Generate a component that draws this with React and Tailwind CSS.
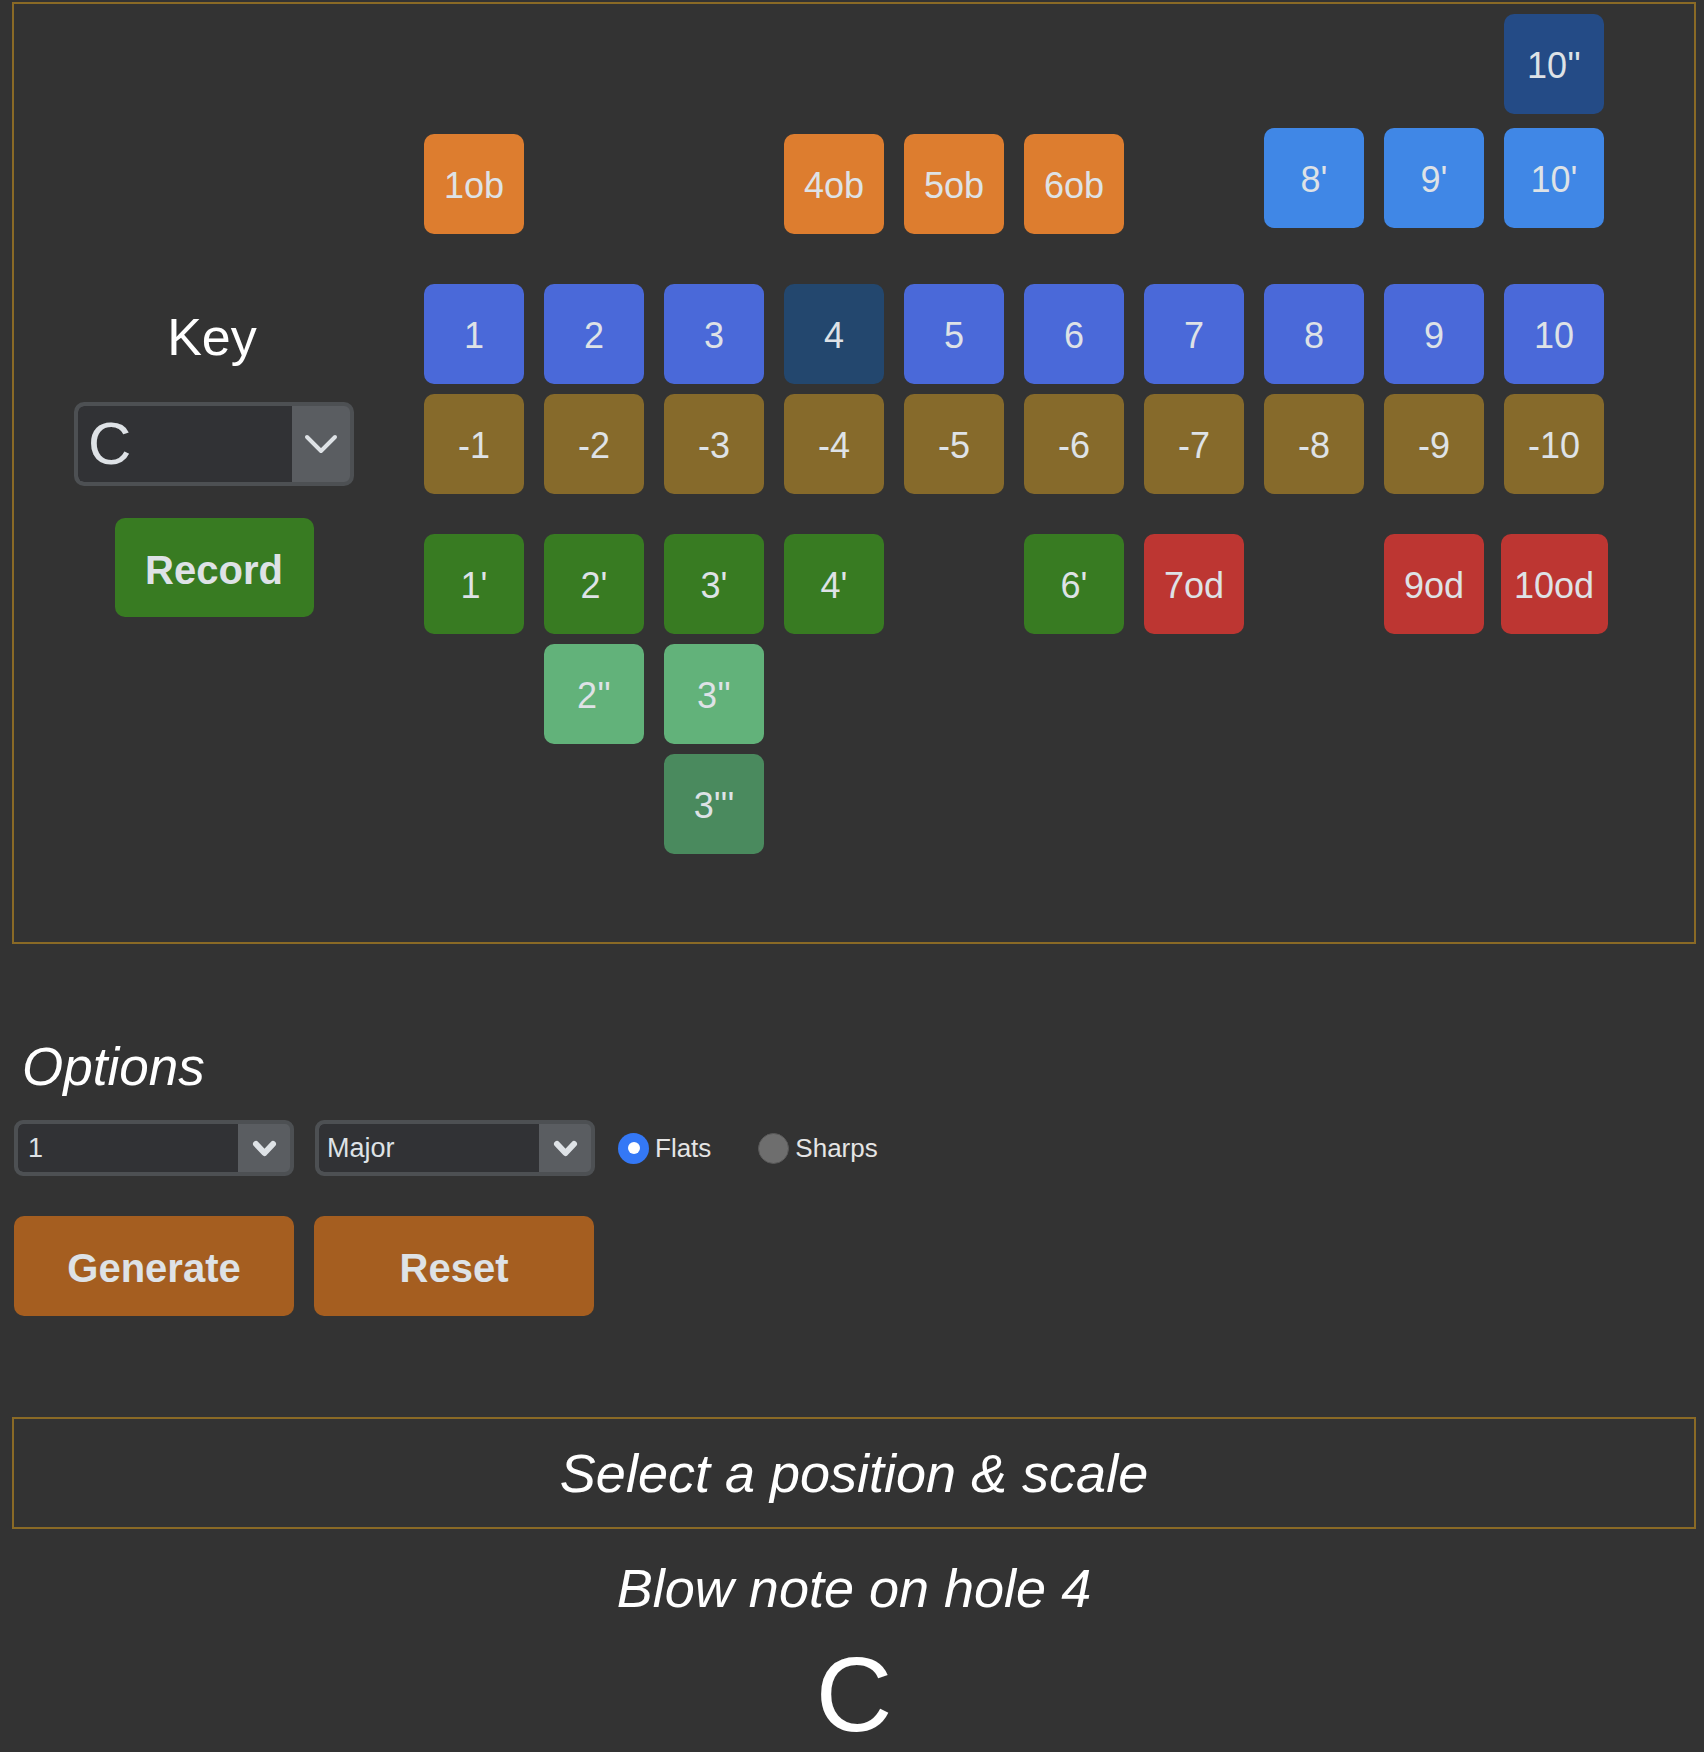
import React from "react";

const BOX =
  "shrink-0 h-[100px] min-w-[100px] px-[13px] pt-[4px] rounded-[10px] flex items-center justify-center text-[36px] text-[#dee2e6]";

const OB = "bg-[#dd7d2f] mt-[6px]";
const BB = "bg-[#4087e6]";
const BB2 = "bg-[#244b86]";
const BLOW = "bg-[#4a69d9]";
const BLOWHI = "bg-[#23476e]";
const DRAW = "bg-[#866a2b]";
const DB = "bg-[#387b22]";
const DB2 = "bg-[#62b27a]";
const DB3 = "bg-[#4a8a5e]";
const OD = "bg-[#bd3632]";
const OD10 = "bg-[#bd3632] w-[107px]";

const n = null;
const rows = [
  { mt: "mt-[0px]", cells: [n, n, n, n, n, n, n, n, n, ["10''", BB2]] },
  {
    mt: "mt-[14px]",
    cells: [
      ["1ob", OB],
      n,
      n,
      ["4ob", OB],
      ["5ob", OB],
      ["6ob", OB],
      n,
      ["8'", BB],
      ["9'", BB],
      ["10'", BB],
    ],
  },
  {
    mt: "mt-[50px]",
    cells: [1, 2, 3, 4, 5, 6, 7, 8, 9, 10].map((i) => [String(i), i === 4 ? BLOWHI : BLOW]),
  },
  {
    mt: "mt-[10px]",
    cells: [1, 2, 3, 4, 5, 6, 7, 8, 9, 10].map((i) => ["-" + i, DRAW]),
  },
  {
    mt: "mt-[40px]",
    cells: [
      ["1'", DB],
      ["2'", DB],
      ["3'", DB],
      ["4'", DB],
      n,
      ["6'", DB],
      ["7od", OD],
      n,
      ["9od", OD],
      ["10od", OD10],
    ],
  },
  { mt: "mt-[10px]", cells: [n, ["2''", DB2], ["3''", DB2], n, n, n, n, n, n, n] },
  { mt: "mt-[10px]", cells: [n, n, ["3'''", DB3], n, n, n, n, n, n, n] },
];

function Chevron({ w, h, sw }) {
  return (
    <svg width={w} height={h} viewBox={`0 0 ${w} ${h}`} fill="none">
      <polyline
        points={`${sw / 2 + 1},${sw / 2 + 1} ${w / 2},${h - sw / 2 - 1} ${w - sw / 2 - 1},${sw / 2 + 1}`}
        stroke="#dee2e6"
        strokeWidth={sw}
        strokeLinecap="round"
        strokeLinejoin="round"
      />
    </svg>
  );
}

export default function App() {
  return (
    <div className="min-h-[1752px] w-[1704px] bg-[#333333] font-['Liberation_Sans',Arial,sans-serif] overflow-hidden">
      {/* Harmonica box */}
      <div className="ml-[12px] mt-[2px] w-[1684px] border-2 border-[#8a6a26] flex">
        <div className="w-[400px] flex flex-col items-center pt-[303px]">
          <div className="text-[52px] leading-[60px] text-white -ml-[4px]">Key</div>
          <div className="mt-[35px] w-[280px] h-[84px] rounded-[10px] border-4 border-[#4d5053] bg-[#5a5d61] flex overflow-hidden">
            <div className="flex-1 bg-[#313235] rounded-[6px] rounded-r-none flex items-center pl-[10px] text-[60px] text-[#dee2e6]">
              C
            </div>
            <div className="w-[58px] flex items-center justify-center">
              <Chevron w={34} h={20} sw={4} />
            </div>
          </div>
          <div className="mt-[32px] w-[199px] h-[99px] pt-[4px] rounded-[10px] bg-[#387b22] flex items-center justify-center text-[40px] font-bold text-[#dee2e6]">
            Record
          </div>
        </div>
        <div className="ml-[10px] flex flex-col pt-[10px] pb-[88px]">
          {rows.map((r, ri) => (
            <div key={ri} className={`flex items-start gap-[20px] ${r.mt}`}>
              {r.cells.map((c, ci) => (
                <div key={ci} className="w-[100px] flex justify-center">
                  {c ? <div className={`${BOX} ${c[1]}`}>{c[0]}</div> : null}
                </div>
              ))}
            </div>
          ))}
        </div>
      </div>

      {/* Options */}
      <div className="px-[14px]">
        <div className="mt-[93px] ml-[8px] text-[53px] leading-[60px] italic text-white">Options</div>
        <div className="mt-[23px] flex items-center">
          <div className="w-[280px] h-[56px] rounded-[9px] border-4 border-[#4d5053] bg-[#5a5d61] flex overflow-hidden">
            <div className="flex-1 bg-[#313235] rounded-[5px] rounded-r-none flex items-center pl-[10px] text-[27px] text-[#dee2e6]">
              1
            </div>
            <div className="w-[52px] flex items-center justify-center">
              <Chevron w={25} h={17} sw={6} />
            </div>
          </div>
          <div className="ml-[21px] w-[280px] h-[56px] rounded-[9px] border-4 border-[#4d5053] bg-[#5a5d61] flex overflow-hidden">
            <div className="flex-1 bg-[#313235] rounded-[5px] rounded-r-none flex items-center pl-[8px] text-[27px] text-[#dee2e6]">
              Major
            </div>
            <div className="w-[52px] flex items-center justify-center">
              <Chevron w={25} h={17} sw={6} />
            </div>
          </div>
          <div className="ml-[23px] w-[31px] h-[31px] rounded-full bg-[#3478f6] flex items-center justify-center">
            <div className="w-[12px] h-[12px] rounded-full bg-white" />
          </div>
          <div className="ml-[6px] text-[26px] text-[#e5e5e5]">Flats</div>
          <div className="ml-[47px] w-[31px] h-[31px] rounded-full bg-[#6e6e6e] border border-[#595959]" />
          <div className="ml-[6px] text-[26px] text-[#e5e5e5]">Sharps</div>
        </div>
        <div className="mt-[40px] flex gap-[20px]">
          <div className="w-[280px] h-[100px] pt-[3px] rounded-[10px] bg-[#a55e20] flex items-center justify-center text-[40px] font-bold text-[#dee2e6]">
            Generate
          </div>
          <div className="w-[280px] h-[100px] pt-[3px] rounded-[10px] bg-[#a55e20] flex items-center justify-center text-[40px] font-bold text-[#dee2e6]">
            Reset
          </div>
        </div>
      </div>

      {/* Result */}
      <div className="mt-[101px] ml-[12px] w-[1684px] h-[112px] border-2 border-[#8a6a26] flex items-center justify-center text-[54px] italic text-white">
        Select a position &amp; scale
      </div>
      <div className="ml-[12px] w-[1684px] mt-[28px] text-center text-[54px] leading-[62px] italic text-white">
        Blow note on hole 4
      </div>
      <div className="ml-[12px] w-[1684px] mt-[22px] text-center text-[106px] leading-none text-white">C</div>
    </div>
  );
}
